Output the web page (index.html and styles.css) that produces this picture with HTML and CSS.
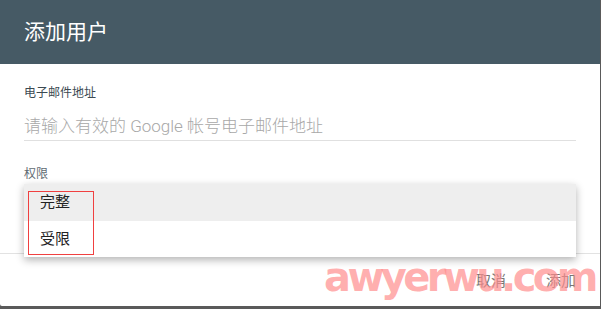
FILE: index.html
```html
<!DOCTYPE html>
<html lang="zh-CN">
<head>
<meta charset="utf-8">
<title>添加用户</title>
<link rel="stylesheet" href="styles.css">
</head>
<body>
<div class="dialog">
  <div class="header">添加用户</div>
  <div class="content">
    <div class="label">电子邮件地址</div>
    <div class="input">请输入有效的 Google 帐号电子邮件地址</div>
    <div class="label perm">权限</div>
    <div class="select">
      <div class="menu">
        <div class="item active">完整</div>
        <div class="item">受限</div>
        <div class="mark"></div>
      </div>
    </div>
  </div>
  <div class="footer">
    <span class="btn">取消</span>
    <span class="btn">添加</span>
  </div>
  <div class="watermark">awyerwu.com</div>
</div>
</body>
</html>
```
FILE: styles.css
```css
html, body {
  margin: 0;
  padding: 0;
}
body {
  background: #5a5a5a;
  width: 601px;
  height: 309px;
  overflow: hidden;
  font-family: Roboto, "Noto Sans CJK SC", sans-serif;
}
.dialog {
  position: relative;
  width: 600px;
  height: 306px;
  background: #fff;
  border-bottom-left-radius: 2px;
}
.header {
  height: 64px;
  line-height: 64px;
  padding-left: 24px;
  background: #465a65;
  color: #fff;
  font-size: 21px;
}
.content {
  height: 190px;
  padding: 21px 24px 0;
  box-sizing: border-box;
  border-bottom: 1px solid #e2e2e2;
}
.label {
  font-size: 12px;
  line-height: 16px;
  color: #3c4a52;
}
.label.perm {
  margin-top: 25px;
  color: #5f6b73;
}
.input {
  margin-top: 8px;
  height: 31px;
  line-height: 34px;
  font-size: 17px;
  font-weight: 300;
  color: #a8a8a8;
  border-bottom: 1px solid #e0e0e0;
}
.select {
  position: relative;
  margin-top: 2px;
  height: 36px;
}
.menu {
  position: absolute;
  left: 0;
  top: 0;
  width: 552px;
  background: #fff;
  box-shadow: 0 3px 8px rgba(0, 0, 0, 0.3);
  z-index: 2;
}
.item {
  height: 36px;
  line-height: 36px;
  padding-left: 16px;
  font-size: 15px;
  color: #222;
}
.item.active {
  height: 37px;
  background: #eeeeee;
}
.mark {
  position: absolute;
  left: 4px;
  top: 7px;
  width: 66px;
  height: 64px;
  box-sizing: border-box;
  border: 1px solid #f04040;
}
.footer {
  height: 51px;
  display: flex;
  justify-content: flex-end;
  align-items: center;
  gap: 40px;
  padding-right: 24px;
}
.btn {
  font-size: 15px;
  color: #777;
}
.watermark {
  position: absolute;
  left: 324px;
  top: 254px;
  font-family: "DejaVu Sans", sans-serif;
  font-weight: bold;
  font-size: 40px;
  letter-spacing: -3.6px;
  color: rgba(255, 140, 140, 0.7);
  z-index: 3;
}
```
